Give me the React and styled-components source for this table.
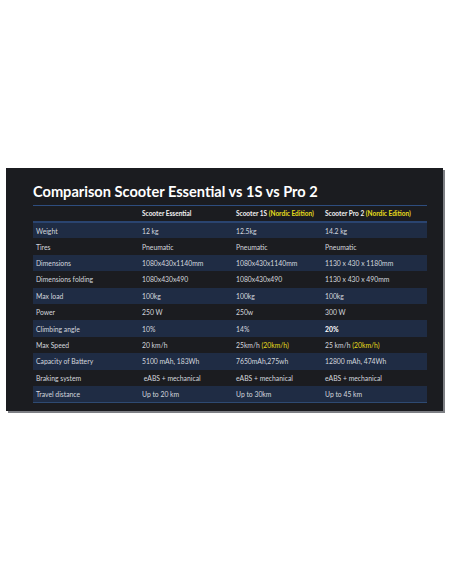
import React from "react";
import styled, { createGlobalStyle } from "styled-components";

const rows = [
  ["Weight", "12 kg", "12.5kg", "14.2 kg"],
  ["Tires", "Pneumatic", "Pneumatic", "Pneumatic"],
  ["Dimensions", "1080x430x1140mm", "1080x430x1140mm", "1130 x 430 x 1180mm"],
  ["Dimensions folding", "1080x430x490", "1080x430x490", "1130 x 430 x 490mm"],
  ["Max load", "100kg", "100kg", "100kg"],
  ["Power", "250 W", "250w", "300 W"],
  ["Climbing angle", "10%", "14%", <b>20%</b>],
  [
    "Max Speed",
    "20 km/h",
    <>
      25km/h <Hl>(20km/h)</Hl>
    </>,
    <>
      25 km/h <Hl>(20km/h)</Hl>
    </>,
  ],
  ["Capacity of Battery", "5100 mAh, 183Wh", "7650mAh,275wh", "12800 mAh, 474Wh"],
  ["Braking system", "\u00a0eABS + mechanical", "eABS + mechanical", "eABS + mechanical"],
  ["Travel distance", "Up to 20 km", "Up to 30km", "Up to 45 km"],
];

function Hl({ children }) {
  return <Yellow>{children}</Yellow>;
}

const App = () => {
  return (
    <>
      <GlobalStyle />
      <Page>
        <Panel>
          <Title>Comparison Scooter Essential vs 1S vs Pro 2</Title>
          <Table>
            <colgroup>
              <col style={{ width: 106 }} />
              <col style={{ width: 94 }} />
              <col style={{ width: 89 }} />
              <col />
            </colgroup>
            <thead>
              <tr>
                <Head></Head>
                <Head>Scooter Essential</Head>
                <Head>
                  Scooter 1S <Yellow>(Nordic Edition)</Yellow>
                </Head>
                <Head>
                  Scooter Pro 2 <Yellow>(Nordic Edition)</Yellow>
                </Head>
              </tr>
            </thead>
            <tbody>
              {rows.map((r, i) => (
                <Row key={i} $striped={i % 2 === 0} $last={i === rows.length - 1}>
                  {r.map((c, j) => (
                    <Cell key={j}>{c}</Cell>
                  ))}
                </Row>
              ))}
            </tbody>
          </Table>
        </Panel>
      </Page>
    </>
  );
};

const GlobalStyle = createGlobalStyle`
  html, body {
    margin: 0;
    padding: 0;
    background: #ffffff;
    font-family: Lato, "Open Sans", sans-serif;
  }
`;

const Page = styled.div`
  width: 452px;
  height: 584px;
  padding-top: 168px;
  padding-left: 6px;
  box-sizing: border-box;
`;

const Panel = styled.div`
  width: 437px;
  height: 243px;
  box-sizing: border-box;
  background: #1b1c20;
  padding: 17px 0 0 27px;
  box-shadow: 2px 2px 0 #7d7f84;
`;

const Title = styled.h1`
  margin: 0;
  font-family: Lato, sans-serif;
  font-weight: 700;
  font-size: 14.6px;
  line-height: 14px;
  color: #ffffff;
`;

const Table = styled.table`
  margin-top: 6px;
  width: 394px;
  border-collapse: collapse;
  table-layout: fixed;
  border-top: 1px solid #2e4d7e;
`;

const Head = styled.th`
  height: 15px;
  padding: 0 3px;
  text-align: left;
  font-size: 6.5px;
  font-weight: 700;
  color: #f2f2f2;
  white-space: nowrap;
  border-bottom: 2px solid #2a4470;
`;

const Yellow = styled.span`
  color: #e6dd1c;
`;

const Row = styled.tr`
  height: 16.4px;
  background: ${(p) => (p.$striped ? "#1f2c44" : "transparent")};
  border-bottom: ${(p) => (p.$last ? "1px solid #2e4a72" : "none")};
`;

const Cell = styled.td`
  padding: 0 3px;
  font-size: 6.8px;
  color: #d3d7de;
  white-space: nowrap;
  b {
    color: #ffffff;
  }
`;

export default App;
